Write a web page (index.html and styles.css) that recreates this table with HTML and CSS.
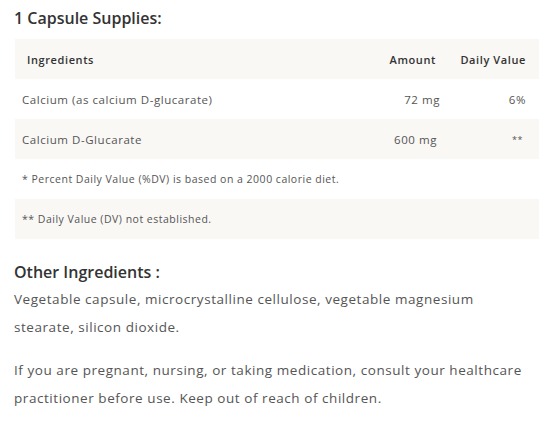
FILE: index.html
```html
<!DOCTYPE html>
<html>
<head>
<meta charset="utf-8">
<link rel="stylesheet" href="styles.css">
</head>
<body>
<div class="page">
  <h2 class="title">1 Capsule Supplies:</h2>
  <div class="facts">
    <div class="row head shade">
      <span class="name">Ingredients</span>
      <span class="amt">Amount</span>
      <span class="dv">Daily Value</span>
    </div>
    <div class="row">
      <span class="name">Calcium (as calcium D-glucarate)</span>
      <span class="amt">72 mg</span>
      <span class="dv">6%</span>
    </div>
    <div class="row shade">
      <span class="name">Calcium D-Glucarate</span>
      <span class="amt">600 mg</span>
      <span class="dv stars">**</span>
    </div>
    <div class="row note">* Percent Daily Value (%DV) is based on a 2000 calorie diet.</div>
    <div class="row note shade">** Daily Value (DV) not established.</div>
  </div>
  <h3 class="subtitle">Other Ingredients :</h3>
  <p class="text">Vegetable capsule, microcrystalline cellulose, vegetable magnesium stearate, silicon dioxide.</p>
  <p class="text warn">If you are pregnant, nursing, or taking medication, consult your healthcare practitioner before use. Keep out of reach of children.</p>
</div>
</body>
</html>
```
FILE: styles.css
```css
html, body {
  margin: 0;
  padding: 0;
  background: #fff;
}
body {
  font-family: "Open Sans", "Noto Sans", sans-serif;
  color: #555;
}
.page {
  padding: 0 15px 0 14px;
  width: 525px;
}
.title {
  margin: 0;
  padding-top: 7px;
  height: 39px;
  box-sizing: border-box;
  font-size: 16px;
  font-weight: 600;
  color: #333;
  line-height: 22px;
}
.facts {
  margin-left: 1px;
  width: 524px;
}
.row {
  display: flex;
  align-items: center;
  height: 40px;
  padding: 0 13px 0 7px;
  font-size: 11.5px;
  color: #555;
  letter-spacing: 0.55px;
}
.row.head {
  font-weight: 600;
  font-size: 11px;
  color: #333;
  padding-left: 12px;
  letter-spacing: 0.6px;
}
.shade {
  background: #f9f8f5;
}
.name {
  flex: 1;
}
.amt {
  width: 90px;
  text-align: right;
}
.dv {
  width: 86px;
  text-align: right;
}
.head .amt {
  padding-right: 4px;
}
.stars {
  font-size: 9px;
  padding-right: 3px;
}
.note {
  font-size: 10.5px;
  letter-spacing: 0.5px;
}
.subtitle {
  margin: 23px 0 0;
  font-size: 16px;
  font-weight: 600;
  color: #333;
  line-height: 20px;
}
.text {
  margin: 3px 0 0;
  font-size: 13.5px;
  line-height: 28px;
  color: #555;
  letter-spacing: 0.55px;
  width: 514px;
}
.warn {
  margin-top: 15px;
}
```
